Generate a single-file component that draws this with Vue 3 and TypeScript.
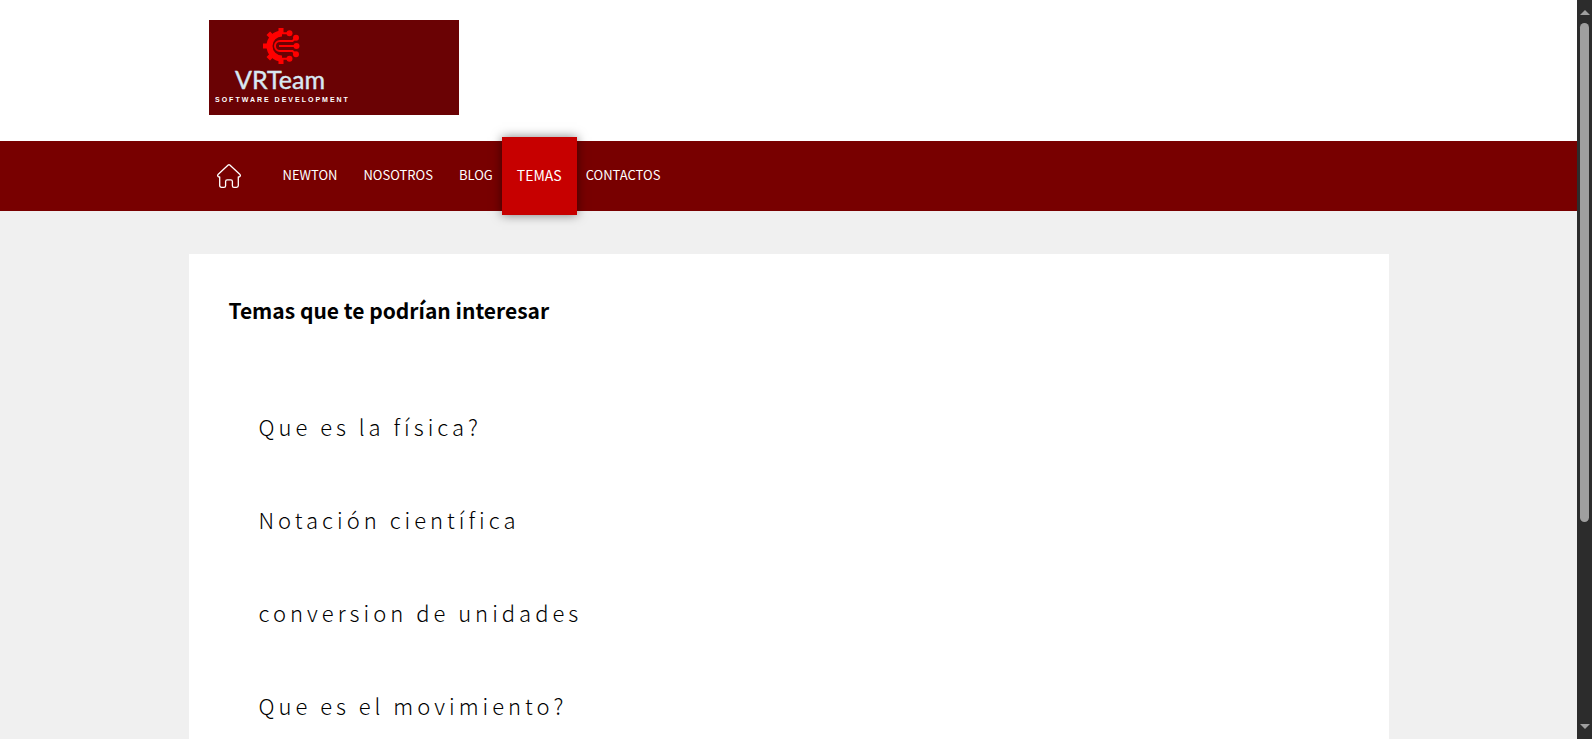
<script setup lang="ts">
interface NavItem {
  label: string
  active?: boolean
}

const navItems: NavItem[] = [
  { label: 'NEWTON' },
  { label: 'NOSOTROS' },
  { label: 'BLOG' },
  { label: 'TEMAS', active: true },
  { label: 'CONTACTOS' },
]

const topics: string[] = [
  'Que es la física?',
  'Notación científica',
  'conversion de unidades',
  'Que es el movimiento?',
]

const teeth: number[] = [180, 225, 270, 315, 360]
</script>

<template>
  <div class="frame">
    <div class="page">
      <header class="header">
        <div class="container">
          <a href="#" class="logo" aria-label="VRTeam Software Development">
            <svg class="logo-art" viewBox="0 0 250 95" width="250" height="95">
              <rect width="250" height="95" fill="#6a0204" />
              <g fill="#ff0000">
                <path d="M73 10.500a15.500 15.500 0 0 0 0 31v-6a9.500 9.500 0 0 1 0-19z" />
                <rect
                  v-for="angle in teeth"
                  :key="angle"
                  x="69.500"
                  y="8"
                  width="5"
                  height="6"
                  :transform="`rotate(${angle} 72 26)`"
                />
                <circle cx="80.500" cy="13.200" r="3" />
                <circle cx="87" cy="17.700" r="3" />
                <circle cx="87.500" cy="26" r="3" />
                <circle cx="87" cy="34.300" r="3" />
                <circle cx="80.500" cy="38.800" r="3" />
              </g>
              <g fill="none" stroke="#ff0000" stroke-width="2">
                <path d="M71 13.200h9M71 38.800h9M70 26h18" />
                <path d="M87 17.700l-3.500 3.300H71a5 5 0 0 0 0 10h12.500l3.500 3.300" />
              </g>
              <text class="logo-name" x="71" y="69" text-anchor="middle">VRTeam</text>
              <text class="logo-tag" x="6" y="82">SOFTWARE DEVELOPMENT</text>
            </svg>
          </a>
        </div>
      </header>

      <nav class="nav">
        <div class="container nav-row">
          <a href="#" class="home" aria-label="Inicio">
            <svg viewBox="0 0 24 24" width="24" height="24" fill="none" stroke="currentColor" stroke-width="1.300" stroke-linejoin="round">
              <path d="M11.200 1.100Q12 .4 12.800 1.100L23 10.600Q23.700 11.500 23 12.300Q22.500 13 21.300 12.900V21.500Q21.300 23.300 19.500 23.300H17Q15.400 23.300 15.400 21.700V17.400Q15.400 15.800 13.800 15.800H10.200Q8.600 15.800 8.600 17.400V21.700Q8.600 23.300 7 23.300H4.500Q2.700 23.300 2.700 21.500V12.900Q1.500 13 1 12.300Q.3 11.500 1 10.600Z" />
            </svg>
          </a>
          <a
            v-for="item in navItems"
            :key="item.label"
            href="#"
            class="nav-link"
            :class="{ active: item.active }"
          >{{ item.label }}</a>
        </div>
      </nav>

      <main class="card">
        <h1 class="title">Temas que te podrían interesar</h1>
        <ul class="topics">
          <li v-for="topic in topics" :key="topic">
            <a href="#" class="topic">{{ topic }}</a>
          </li>
        </ul>
      </main>
    </div>

    <div class="scrollbar" aria-hidden="true">
      <span class="arrow up"></span>
      <span class="track"><span class="thumb"></span></span>
      <span class="arrow down"></span>
    </div>
  </div>
</template>

<style>
body {
  margin: 0;
  background: #f0f0f0;
}
</style>

<style scoped>
.frame {
  display: grid;
  grid-template-columns: minmax(0, 1fr) 15px;
  height: 100vh;
  overflow: hidden;
  font-family: "Noto Sans CJK SC", "Noto Sans", sans-serif;
  background: #f0f0f0;
}

.page {
  overflow: hidden;
}

.container {
  box-sizing: border-box;
  max-width: 1200px;
  margin: 0 auto;
  padding: 0 20px;
}

.header {
  padding: 20px 0 26px;
  background: #fff;
}

.logo,
.logo-art {
  display: block;
  width: 250px;
}

.logo-name {
  font: 25px Lato, sans-serif;
  fill: #d8e8f2;
  stroke: #d8e8f2;
  stroke-width: 0.4px;
}

.logo-tag {
  font: bold 7px "Liberation Sans", sans-serif;
  letter-spacing: 2px;
  fill: #fff;
}

.nav {
  background: #780000;
}

.nav-row {
  display: flex;
  align-items: stretch;
  height: 70px;
}

.home {
  display: flex;
  align-items: center;
  padding: 0 29px 0 8px;
  color: #fff;
}

.nav-link {
  display: flex;
  align-items: center;
  padding: 0 13px 3px;
  font-size: 13px;
  color: #fff;
  text-decoration: none;
}

.nav-link.active {
  position: relative;
  z-index: 1;
  margin: -4px;
  padding: 0 15px 3px;
  background: #c70000;
  box-shadow: 0 0 10px rgba(0, 0, 0, 0.5);
  font-size: 14px;
}

.card {
  box-sizing: border-box;
  max-width: 1200px;
  min-height: 100vh;
  margin: 43px auto 0;
  padding: 40px;
  background: #fff;
}

.title {
  margin: 0;
  font-size: 21px;
  line-height: 32px;
  font-weight: 700;
  color: #000;
}

.topics {
  margin: 54px 0 0;
  padding: 0 0 0 30px;
  list-style: none;
}

.topic {
  display: block;
  font-size: 22px;
  line-height: 93px;
  font-weight: 300;
  letter-spacing: 4px;
  color: #000;
  text-decoration: none;
}

.scrollbar {
  display: flex;
  flex-direction: column;
  align-items: center;
  padding: 10px 0;
  background: #2c2c2c;
}

.arrow {
  width: 0;
  border: 5px solid transparent;
  border-width: 0 5px;
}

.arrow.up {
  border-bottom: 5px solid #9f9f9f;
}

.arrow.down {
  border-top: 5px solid #9f9f9f;
}

.track {
  flex: 1;
  padding: 8px 0;
}

.thumb {
  display: block;
  width: 9px;
  height: 72%;
  border-radius: 5px;
  background: #9f9f9f;
}
</style>
